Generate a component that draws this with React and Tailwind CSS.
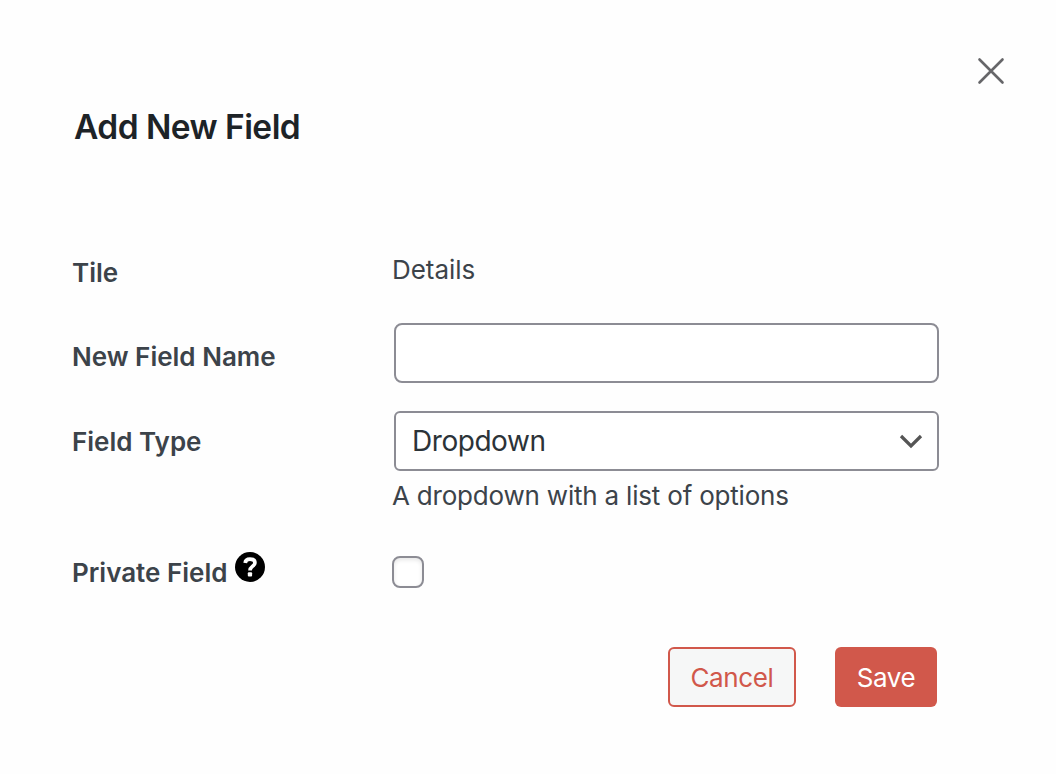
import React from 'react';

function Label({ children, className }) {
  return <label className={`w-[320px] shrink-0 text-[26px] leading-8 font-semibold whitespace-nowrap ${className}`}>{children}</label>;
}

export default function App() {
  return (
    <main className="h-[774px] w-full overflow-hidden bg-[#fefefe] pt-[57px] pl-[72px] font-['Inter',sans-serif] text-[#3c434a]">
      <div className="flex h-[28px] justify-end pr-[51px]">
        <button aria-label="Close" className="h-7 w-7">
          <svg viewBox="0 0 28 28" className="h-7 w-7" fill="none" stroke="#666669" strokeWidth="2.6" strokeLinecap="round">
            <path d="M2.5 2.5 25.5 25.5M25.5 2.5 2.5 25.5" />
          </svg>
        </button>
      </div>
      <h1 className="mt-[22px] ml-[2px] h-10 text-[33.5px] leading-10 font-semibold tracking-[-0.55px] text-[#1d2327]">Add New Field</h1>
      <div className="mt-[107px] flex h-[69px]">
        <Label className="pt-[3px]">Tile</Label>
        <span className="text-[26px] leading-8 tracking-[-0.05px]">Details</span>
      </div>
      <div className="flex h-[88px]">
        <Label className="pt-[18px]">New Field Name</Label>
        <input aria-label="New Field Name" className="ml-[2px] h-[60px] w-[545px] rounded-[8px] border-2 border-[#8c8c94] bg-white px-4" />
      </div>
      <div className="flex h-[145px]">
        <Label className="pt-[15px]">Field Type</Label>
        <div>
          <button className="ml-[2px] flex h-[60px] w-[545px] items-center justify-between rounded-[6px] border-2 border-[#8c8c94] bg-white pr-[14px] pl-[16px] text-[28px] text-[#2c3338]">
            <span className="tracking-[-0.45px]">Dropdown</span>
            <svg viewBox="0 0 24 16" className="h-4 w-6" fill="none" stroke="#555" strokeWidth="3.2"><path d="m2 3 10 10L22 3" /></svg>
          </button>
          <p className="mt-[9px] text-[26px] leading-8 tracking-[-0.2px]">A dropdown with a list of options</p>
        </div>
      </div>
      <div className="flex h-[91px]">
        <Label className="flex">
          <span className="pt-px">Private Field</span>
          <svg viewBox="0 0 30 30" className="-mt-1 ml-2 h-[30px] w-[30px]">
            <circle cx="15" cy="15" r="15" />
            <path d="M10.2 11Q10.5 7.2 15 7.2 19.9 7.2 19.9 10.9C19.9 14.2 15 14.2 15 18.5" fill="none" stroke="#fff" strokeWidth="3.7" />
            <rect x="12.8" y="20.3" width="4.3" height="4.2" rx="1" fill="#fff" />
          </svg>
        </Label>
        <input type="checkbox" aria-label="Private Field" className="h-8 w-8 appearance-none rounded-[8px] border-2 border-[#8c8c94] bg-white shadow-[inset_0_2px_4px_rgba(0,0,0,0.1)]" />
      </div>
      <div className="flex justify-end gap-[39px] pr-[119px]">
        <button className="h-[60px] w-[128px] rounded-[6px] border-2 border-[#d1584b] bg-[#f6f7f7] text-[26px] tracking-[-0.35px] text-[#d1584b]">Cancel</button>
        <button className="h-[60px] w-[102px] rounded-[6px] bg-[#d1584b] text-[26px] tracking-[-0.4px] text-white">Save</button>
      </div>
    </main>
  );
}
